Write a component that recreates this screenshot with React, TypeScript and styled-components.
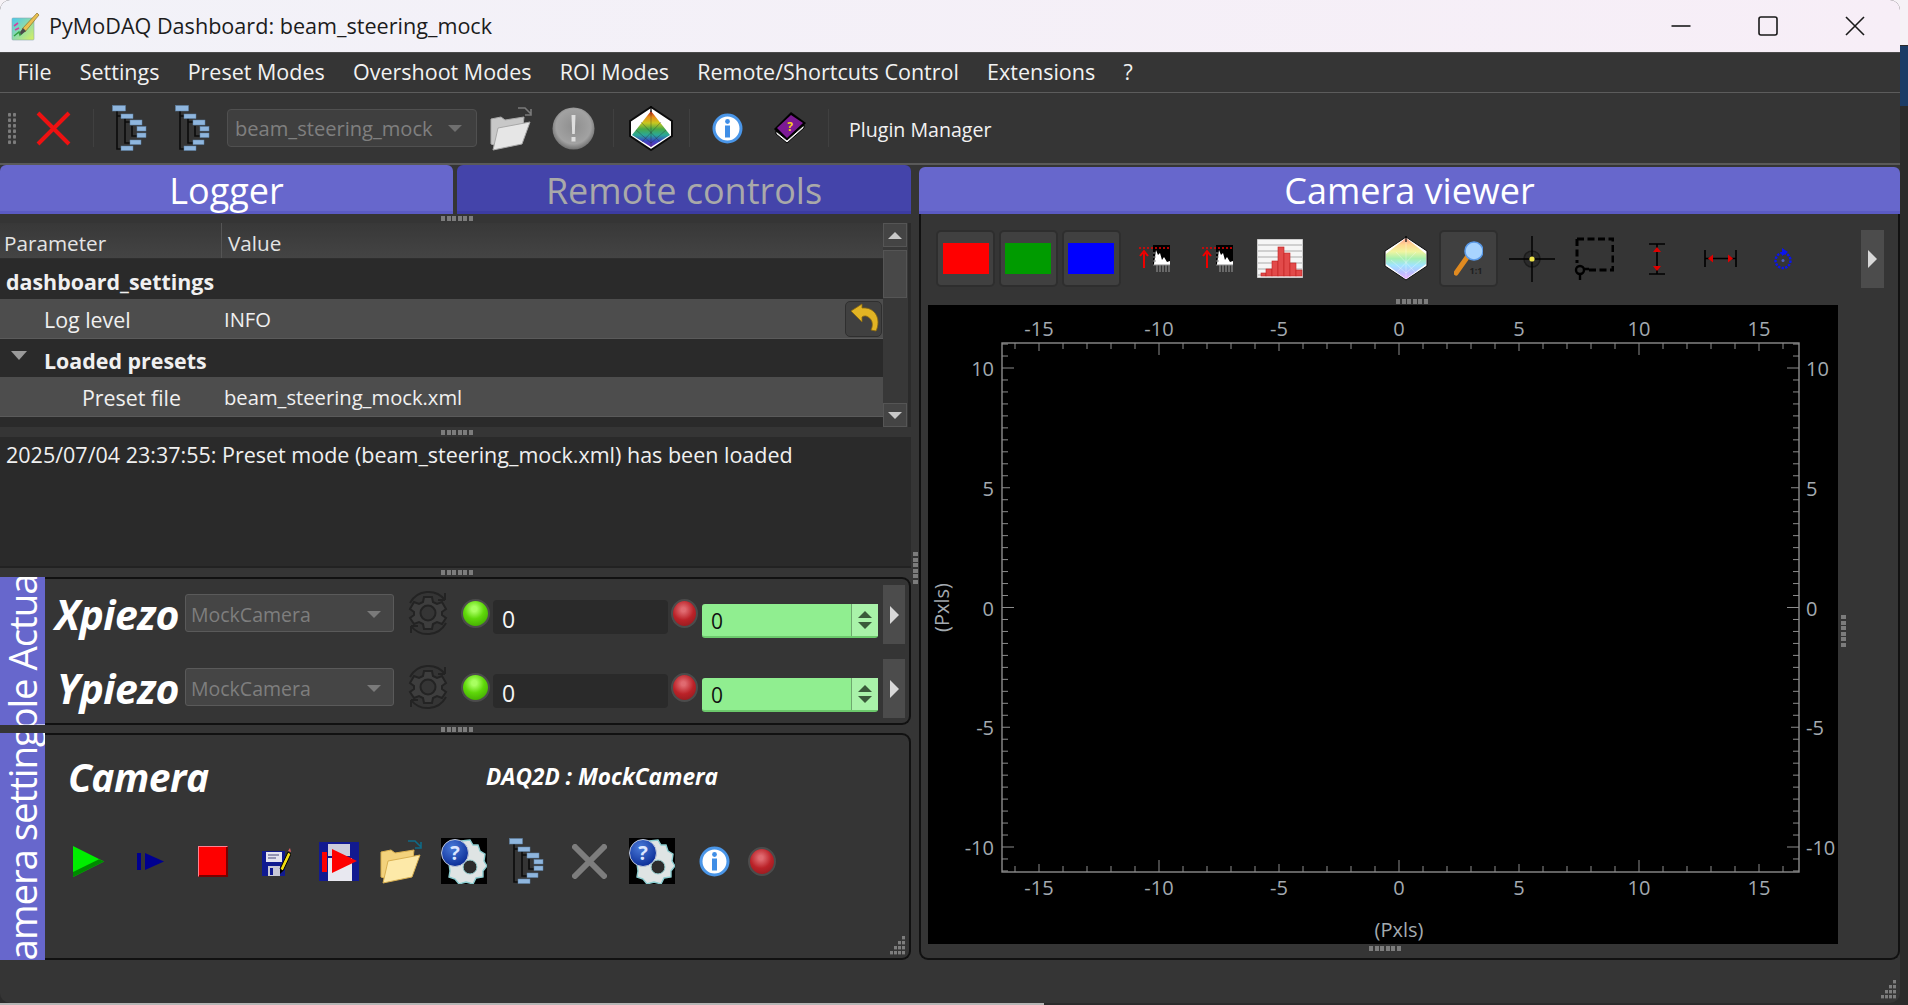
import React from 'react';
import styled, { createGlobalStyle } from 'styled-components';

const GlobalStyle = createGlobalStyle`
  html, body {
    margin: 0;
    padding: 0;
    background: #2b2b2b;
    overflow: hidden;
  }
  * {
    box-sizing: border-box;
  }
`;

const UI_FONT = `"Open Sans", "Noto Sans", "Liberation Sans", sans-serif`;

const Screen = styled.div`
  width: 1908px;
  height: 1005px;
  display: flex;
  flex-direction: column;
  overflow: hidden;
  font-family: ${UI_FONT};
  background: #2b2b2b;
`;

const ScreenTop = styled.div`
  display: flex;
  height: 1003px;
  background: linear-gradient(#f6f2f6 0 45px, transparent 45px);
`;

const ScreenBottom = styled.div`
  height: 2px;
  background: linear-gradient(to right, #b5b5b5 1044px, #2b2b2b 1044px);
`;

const EdgeStrip = styled.div`
  width: 8px;
  padding-top: 46px;
`;

const EdgeBand = styled.div`
  height: 60px;
  background: #1c3c66;
`;

const Window = styled.div`
  width: 1900px;
  height: 1003px;
  display: flex;
  flex-direction: column;
  background: #353535;
  border-radius: 10px;
  overflow: hidden;
`;

const TitleBar = styled.div`
  height: 52px;
  flex: none;
  display: flex;
  align-items: center;
  padding-left: 11px;
  padding-right: 2px;
  background: linear-gradient(to right, #f2f2f8, #f7eef7);
`;

const TitleText = styled.span`
  margin-left: 9px;
  margin-bottom: 2px;
  font-size: 21.6px;
  color: #1c1c1c;
`;

const WindowButtons = styled.div`
  margin-left: auto;
  display: flex;
`;

const WindowButton = styled.div`
  width: 87px;
  height: 52px;
  display: flex;
  align-items: center;
  justify-content: center;
`;

const MenuBar = styled.div`
  height: 41px;
  flex: none;
  display: flex;
  align-items: center;
  padding: 0 0 2px 17.5px;
  gap: 28.2px;
  background: #353535;
  border-bottom: 1px solid #5c5c5c;
  border-top: 1px solid #4a4a4a;
`;

const MenuItem = styled.span`
  font-size: 21.5px;
  color: #f2f2f2;
`;

const ToolBar = styled.div`
  height: 72px;
  flex: none;
  display: flex;
  align-items: center;
  background: #353535;
  border-bottom: 2px solid #5a5a5a;
`;

const Grip = styled.div`
  width: 10px;
  height: 33px;
  margin: 0 5px 0 7px;
  background-image: radial-gradient(circle, #7d7d7d 1.6px, transparent 2px);
  background-size: 5px 5.5px;
`;

const ToolCell = styled.div<{ $w: number }>`
  width: ${(p) => p.$w}px;
  flex: none;
  display: flex;
  align-items: center;
  justify-content: center;
`;

const ToolSep = styled.div`
  width: 1px;
  height: 38px;
  flex: none;
  background: #404040;
`;

const PresetCombo = styled.div`
  width: 250px;
  height: 38px;
  margin-left: 8px;
  flex: none;
  display: flex;
  align-items: center;
  justify-content: space-between;
  padding: 0 14px 0 7px;
  border: 1px solid #505050;
  border-radius: 4px;
  background: #3f3f3f;
  color: #7f7f7f;
  font-size: 20.1px;
`;

const ToolLabel = styled.span`
  margin-left: 20px;
  padding-top: 2px;
  font-size: 19.6px;
  color: #f2f2f2;
`;

const Body = styled.div`
  flex: 1;
  display: flex;
  min-height: 0;
`;

const LeftColumn = styled.div`
  width: 911px;
  flex: none;
  display: flex;
  flex-direction: column;
`;

const TabBar = styled.div`
  height: 49px;
  flex: none;
  display: flex;
  gap: 4px;
`;

const Tab = styled.div<{ $active?: boolean; $w?: number }>`
  width: ${(p) => (p.$w ? `${p.$w}px` : 'auto')};
  flex: ${(p) => (p.$w ? 'none' : 1)};
  display: flex;
  align-items: center;
  justify-content: center;
  padding-top: 4px;
  font-size: 36px;
  border-radius: 6px 6px 0 0;
  border-bottom: 3px solid ${(p) => (p.$active ? '#5b5bc4' : '#3c3ca2')};
  background: ${(p) => (p.$active ? '#6767cc' : '#4444aa')};
  color: ${(p) => (p.$active ? '#ffffff' : '#a9a9a9')};
`;

const HandleRow = styled.div<{ $h: number; $left?: number; $right?: number }>`
  height: ${(p) => p.$h}px;
  flex: none;
  display: flex;
  align-items: center;
  justify-content: center;
  padding-left: ${(p) => p.$left || 0}px;
  padding-right: ${(p) => p.$right || 0}px;
`;

const Dots = styled.div`
  width: 33px;
  height: 5px;
  background: repeating-linear-gradient(90deg, #7c7c7c 0 4px, transparent 4px 5.6px);
`;

const TreePane = styled.div`
  height: 204px;
  flex: none;
  display: flex;
  background: #2a2a2a;
`;

const TreeTable = styled.div`
  width: 883px;
  flex: none;
  display: flex;
  flex-direction: column;
`;

const TreeHeader = styled.div`
  height: 36px;
  flex: none;
  display: flex;
  align-items: center;
  background: linear-gradient(#383838, #444444);
  border-bottom: 1px solid #2e2e2e;
  font-size: 20.7px;
  color: #e4e4e4;
`;

const HeaderCell = styled.div<{ $first?: boolean }>`
  width: ${(p) => (p.$first ? '222px' : 'auto')};
  height: 100%;
  display: flex;
  align-items: center;
  padding-top: 4px;
  padding-left: ${(p) => (p.$first ? '4px' : '6px')};
  border-right: ${(p) => (p.$first ? '1px solid #555' : 'none')};
`;

const TreeRow = styled.div<{ $filled?: boolean; $h: number }>`
  height: ${(p) => p.$h}px;
  flex: none;
  display: flex;
  align-items: center;
  color: #f0f0f0;
  background: ${(p) => (p.$filled ? '#4d4d4d' : '#2a2a2a')};
  border-bottom: ${(p) => (p.$filled ? '1px solid #5a5a5a' : 'none')};
`;

const NameCell = styled.div<{ $indent: number; $bold?: boolean }>`
  width: 224px;
  flex: none;
  position: relative;
  padding-left: ${(p) => p.$indent}px;
  padding-top: ${(p) => (p.$bold ? 4 : 1)}px;
  font-size: 21.4px;
  font-weight: ${(p) => (p.$bold ? 700 : 400)};
  white-space: nowrap;
`;

const ValueCell = styled.div`
  flex: 1;
  font-size: 20.2px;
`;

const ExpandArrow = styled.span`
  position: absolute;
  left: 11px;
  top: 9px;
  border-left: 8px solid transparent;
  border-right: 8px solid transparent;
  border-top: 9px solid #9a9a9a;
`;

const RevertButton = styled.div`
  width: 37px;
  height: 36px;
  margin-right: 1px;
  flex: none;
  display: flex;
  align-items: flex-start;
  justify-content: center;
  padding-top: 1px;
  border: 1px solid #2f2f2f;
  border-radius: 5px;
  background: #404040;
`;

const ScrollBar = styled.div`
  width: 25px;
  flex: none;
  display: flex;
  flex-direction: column;
  background: #383838;
  padding-right: 1px;
`;

const ScrollButton = styled.div`
  height: 24px;
  flex: none;
  display: flex;
  align-items: center;
  justify-content: center;
  background: #444;
  border: 1px solid #555;
`;

const ScrollTrack = styled.div`
  flex: 1;
  padding-top: 3px;
`;

const ScrollThumb = styled.div`
  height: 48px;
  background: #484848;
  border: 1px solid #555;
`;

const Triangle = styled.span<{ $down?: boolean; $size?: number; $color?: string }>`
  border-left: ${(p) => p.$size || 7}px solid transparent;
  border-right: ${(p) => p.$size || 7}px solid transparent;
  ${(p) => (p.$down ? 'border-top' : 'border-bottom')}: ${(p) => p.$size || 7}px solid ${(p) => p.$color || '#c8c8c8'};
`;

const LogPane = styled.div`
  height: 131px;
  flex: none;
  padding: 3px 6px;
  font-size: 21.5px;
  color: #f0f0f0;
  background: #2a2a2a;
  border-bottom: 2px solid #222;
`;

const Dock = styled.div<{ $h: number }>`
  height: ${(p) => p.$h}px;
  flex: none;
  display: flex;
`;

const VerticalTab = styled.div`
  width: 45px;
  flex: none;
  display: flex;
  align-items: center;
  justify-content: center;
  overflow: hidden;
  background: #6767cc;
`;

const VerticalText = styled.span`
  flex: none;
  writing-mode: vertical-rl;
  transform: rotate(180deg);
  white-space: nowrap;
  color: #fff;
  font-size: 38.5px;
  line-height: 45px;
  letter-spacing: -1.1px;
`;

const DockBody = styled.div<{ $pad?: string }>`
  flex: 1;
  position: relative;
  padding: ${(p) => p.$pad || '0'};
  background: #353535;
  border: 2px solid #111;
  border-left: none;
  border-radius: 0 9px 9px 0;
`;

const ActuatorRow = styled.div`
  height: 74px;
  display: flex;
  align-items: flex-start;
  padding-left: 2px;
`;

const ActuatorName = styled.div`
  width: 132px;
  margin-top: 1px;
  flex: none;
  text-align: right;
  font-size: 41px;
  font-weight: 700;
  font-style: italic;
  color: #fff;
  letter-spacing: -0.5px;
  white-space: nowrap;
`;

const ModuleCombo = styled.div`
  width: 209px;
  height: 38px;
  margin: 9px 0 0 6px;
  flex: none;
  display: flex;
  align-items: center;
  justify-content: space-between;
  padding: 2px 12px 0 5px;
  border: 1px solid #5a5a5a;
  border-radius: 3px;
  background: #454545;
  color: #7e7e7e;
  font-size: 19.5px;
`;

const GearSlot = styled.div`
  width: 46px;
  margin: 5px 0 0 11px;
  flex: none;
`;

const Led = styled.div<{ $color: 'green' | 'red'; $w: number; $ml: number; $mt: number }>`
  width: ${(p) => p.$w}px;
  height: 29px;
  margin: ${(p) => p.$mt}px 0 0 ${(p) => p.$ml}px;
  flex: none;
  border-radius: 50%;
  border: 2px solid #4c4c4c;
  background: ${(p) =>
    p.$color === 'green'
      ? 'radial-gradient(circle at 45% 32%, #a8ff60 0 12%, #5fd80a 45%, #3ea400 90%)'
      : 'radial-gradient(circle at 45% 35%, #e06a70 0 10%, #bb2228 50%, #8e1a1e 92%)'};
`;

const ValueDisplay = styled.div`
  width: 175px;
  height: 34px;
  margin: 15px 0 0 3px;
  flex: none;
  padding: 4px 9px;
  border-radius: 4px;
  background: #2a2a2a;
  color: #f5f5f5;
  font-size: 23px;
  line-height: 30px;
`;

const SpinBox = styled.div`
  width: 176px;
  height: 34px;
  margin: 19px 0 0 4px;
  flex: none;
  display: flex;
  justify-content: space-between;
  border-radius: 3px;
  border-bottom: 2px solid #6cc96c;
  background: #90ee90;
  color: #111;
  font-size: 21px;
  line-height: 34px;
  padding-left: 9px;
`;

const SpinSteps = styled.div`
  width: 27px;
  flex: none;
  display: flex;
  flex-direction: column;
  align-items: center;
  justify-content: center;
  gap: 4px;
  background: #a9f2a9;
  border-left: 1px solid #6fa86f;
`;

const SideToggle = styled.div<{ $w?: number; $ml?: string; $h?: number }>`
  width: ${(p) => p.$w || 22}px;
  height: ${(p) => p.$h || 59}px;
  margin-left: ${(p) => p.$ml || '5px'};
  flex: none;
  display: flex;
  align-items: center;
  justify-content: center;
  background: #4c4c4c;
`;

const RightArrow = styled.span`
  border-top: 9px solid transparent;
  border-bottom: 9px solid transparent;
  border-left: 9px solid #d8d8d8;
`;

const CameraHead = styled.div`
  height: 82px;
  display: flex;
  align-items: center;
  padding-left: 23px;
`;

const CameraName = styled.div`
  width: 417px;
  flex: none;
  font-size: 39px;
  font-weight: 700;
  font-style: italic;
  color: #fff;
  letter-spacing: -0.5px;
`;

const ModuleTag = styled.div`
  margin-left: 1px;
  font-size: 22.6px;
  font-weight: 700;
  font-style: italic;
  color: #fff;
`;

const IconRow = styled.div`
  display: flex;
  align-items: center;
  height: 50px;
  margin-top: 19px;
  padding-left: 12px;
`;

const SizeGrip = styled.div<{ $r: number; $b: number }>`
  position: absolute;
  right: ${(p) => p.$r}px;
  bottom: ${(p) => p.$b}px;
  line-height: 0;
`;

const Gutter = styled.div`
  width: 8px;
  flex: none;
  display: flex;
  align-items: center;
  justify-content: center;
  padding-bottom: 34px;
`;

const GutterDots = styled.div`
  width: 5px;
  height: 33px;
  background: repeating-linear-gradient(0deg, #7c7c7c 0 4px, transparent 4px 5.6px);
`;

const RightColumn = styled.div`
  flex: 1;
  min-width: 0;
  position: relative;
  display: flex;
  flex-direction: column;
  padding-top: 2px;
`;

const ViewerTab = styled(Tab)`
  height: 47px;
  flex: none;
  padding-top: 2px;
`;

const ViewerPanel = styled.div`
  height: 746px;
  flex: none;
  display: flex;
  flex-direction: column;
  border: 2px solid #111;
  border-top: none;
  border-radius: 0 0 9px 9px;
`;

const ViewerTools = styled.div`
  height: 83px;
  flex: none;
  display: flex;
  align-items: center;
  gap: 3.9px;
  padding: 6px 14px 0 15px;
`;

const CheckButton = styled.div<{ $checked?: boolean }>`
  width: 59px;
  height: 57px;
  flex: none;
  display: flex;
  align-items: center;
  justify-content: center;
  border-radius: 5px;
  border: ${(p) => (p.$checked ? '2px solid #2e2e2e' : '2px solid transparent')};
  background: ${(p) => (p.$checked ? '#404040' : 'transparent')};
`;

const ColorSwatch = styled.div<{ $color: string }>`
  width: 46px;
  height: 31px;
  background: ${(p) => p.$color};
`;

const ViewerMiddle = styled.div`
  flex: none;
  display: flex;
  padding-left: 7px;
  height: 639px;
`;

const PlotBox = styled.div`
  width: 910px;
  flex: none;
  height: 639px;
  background: #000;
`;

const PlotSide = styled.div`
  flex: 1;
  display: flex;
  align-items: center;
  padding: 12px 0 0 3px;
`;

/* ---------- drawn icons ---------- */

const TreeIcon = () => (
  <svg width="35" height="46" viewBox="0 0 35 46">
    <g stroke="#0c0c0c" strokeWidth="1.6" fill="none">
      <path d="M5 6V44H9M5 11H9" />
      <path d="M13 13V38H18M13 17H18" />
      <path d="M20 21V31H25" />
    </g>
    <g fill="#8fb6de" stroke="#5f83a8" strokeWidth="0.5">
      <rect x="0.5" y="0.5" width="13" height="5.5" />
      <rect x="9" y="9" width="12" height="4.5" />
      <rect x="18" y="15" width="12" height="5" />
      <rect x="25" y="21.5" width="9" height="4.5" />
      <rect x="25" y="28" width="9" height="4.5" />
      <rect x="18" y="35" width="11" height="4.5" />
      <rect x="9" y="41" width="12" height="4.5" />
    </g>
  </svg>
);

const FolderIcon = ({ gray }: { gray?: boolean }) => {
  const back = gray ? '#c8c8c8' : '#f3d27c';
  const front = gray ? '#e6e6e6' : '#fde9a8';
  const edge = gray ? '#a8a8a8' : '#d9b050';
  const arrow = gray ? '#7a7a7a' : '#0f6a86';
  return (
    <svg width="45" height="45" viewBox="0 0 45 45">
      <path d="M29 2H36L42 8M42 3V9H36" fill="none" stroke={arrow} strokeWidth="1.6" />
      <path d="M2 13L12 11L16 14L35 11L34 20L5 39L2 38Z" fill={back} stroke={edge} strokeWidth="1" />
      <path d="M9 22L41 16L33 38L4 44Z" fill={front} stroke={edge} strokeWidth="1" />
    </svg>
  );
};

const WarningIcon = () => (
  <svg width="43" height="43" viewBox="0 0 43 43">
    <defs>
      <radialGradient id="warnBall" cx="50%" cy="45%" r="55%">
        <stop offset="0" stopColor="#8e8e8e" />
        <stop offset="0.75" stopColor="#a2a2a2" />
        <stop offset="1" stopColor="#707070" />
      </radialGradient>
    </defs>
    <circle cx="21.5" cy="21.5" r="21" fill="url(#warnBall)" />
    <path d="M19.5 8H23.5L22.8 27H20.2Z" fill="#dedede" />
    <rect x="19.5" y="30" width="4" height="4.5" fill="#dedede" />
  </svg>
);

const ColormapIcon = ({ id, pale }: { id: string; pale?: boolean }) => {
  const stops = pale
    ? ['#ff9c90', '#ffd890', '#f0f5a0', '#a8f0b0', '#a0e4ff', '#b8c0ff', '#eeb0ff']
    : ['#b81a10', '#e89018', '#c8c820', '#48a848', '#2aa898', '#3848c0', '#6a2ab8'];
  const body = pale ? 'M23 2L43 18V28L23 43L3 28V18Z' : 'M23 5L42 29L23 41L4 29Z';
  return (
    <svg width="46" height="45" viewBox="0 0 46 45">
      <defs>
        <linearGradient id={id} x1="0" y1="0" x2="0" y2="1">
          {stops.map((c, i) => (
            <stop key={c} offset={i / (stops.length - 1)} stopColor={c} />
          ))}
        </linearGradient>
      </defs>
      <path
        d="M23 1L44 15V30L23 44L2 30V15Z"
        fill="#fff"
        stroke="#0c0c0c"
        strokeWidth={pale ? 1 : 2}
      />
      <path d={body} fill={`url(#${id})`} />
      <g stroke={pale ? '#ffffff' : '#222'} strokeWidth="0.6" opacity="0.55" fill="none">
        <path d="M23 4V41M13 16L32 36M33 16L14 36M8 24L23 37L38 24" />
      </g>
      <path d="M23 0V6" stroke="#000" strokeWidth="1.2" />
    </svg>
  );
};

const InfoIcon = () => (
  <svg width="31" height="31" viewBox="0 0 31 31">
    <circle cx="15.5" cy="15.5" r="13.5" fill="#fff" stroke="#4a96e8" strokeWidth="3" />
    <circle cx="15.5" cy="8.5" r="2.4" fill="#3f8ee6" />
    <rect x="13" y="12.5" width="5" height="12" fill="#3f8ee6" />
  </svg>
);

const BookIcon = () => (
  <svg width="32" height="32" viewBox="0 0 32 32">
    <path d="M0 17L17 0L32 11L13 31Z" fill="#000" />
    <path d="M2 19L13 28L30 13V16L13 31L2 22Z" fill="#ececec" stroke="#000" strokeWidth="1" />
    <path d="M3 16L17 3L29 11L13 26Z" fill="#7c1a94" />
    <text x="16" y="19" fontFamily={UI_FONT} fontSize="12" fontWeight="700" fill="#f5d020" textAnchor="middle">
      ?
    </text>
  </svg>
);

const RevertIcon = () => (
  <svg width="30" height="30" viewBox="0 0 30 30">
    <path
      d="M2 8L13 1V5C22 4 29 10 29 19C29 23 28 26 27 28L22 27C25 21 23 15 17 13C15 13 14 13 13 14V19Z"
      fill="#e2b424"
      stroke="#8a6a10"
      strokeWidth="0.8"
    />
  </svg>
);

const CloseRedIcon = () => (
  <svg width="35" height="35" viewBox="0 0 35 35">
    <path d="M2 2L33 33M33 2L2 33" stroke="#ee1111" strokeWidth="4" />
  </svg>
);

const GrayCross = () => (
  <svg width="35" height="35" viewBox="0 0 35 35">
    <path d="M3 3L32 32M32 3L3 32" stroke="#7d7d7d" strokeWidth="6" strokeLinecap="round" />
  </svg>
);

const GearOutline = () => (
  <svg width="46" height="46" viewBox="0 0 46 46" fill="none" stroke="#232323" strokeWidth="2">
    <path d="M5 13A21 21 0 0 1 40 10M40 10L40 3M40 10L33 10" />
    <path d="M41 33A21 21 0 0 1 6 36M6 36L6 43M6 36L13 36" />
    <path
      d="M19 7H27L28 12L32 14L37 12L41 19L37 22V25L41 28L37 34L32 32L28 34L27 39H19L18 34L14 32L9 34L5 28L9 25V22L5 19L9 12L14 14L18 12Z"
      fill="#3e3e3e"
    />
    <circle cx="23" cy="23" r="7.5" fill="#353535" />
  </svg>
);

const HelpGear = ({ id }: { id: string }) => (
  <svg width="46" height="46" viewBox="0 0 46 46">
    <defs>
      <radialGradient id={id} cx="40%" cy="30%" r="70%">
        <stop offset="0" stopColor="#4a7ad8" />
        <stop offset="1" stopColor="#0c2e98" />
      </radialGradient>
    </defs>
    <rect width="46" height="46" fill="#000" />
    <path
      d="M20 3L29 2L32 7L37 7L39 13L44 16L43 23L46 28L42 33L42 39L35 40L32 46L25 44L18 46L14 41L8 39L9 33L8 26L16 22Z"
      fill="#dfe4e4"
      stroke="#8ccdd0"
      strokeWidth="1.4"
    />
    <circle cx="29" cy="29" r="7" fill="#2c2c2c" stroke="#9ad4d6" strokeWidth="1" />
    <circle cx="14" cy="15" r="13.5" fill={`url(#${id})`} stroke="#c0c8d8" strokeWidth="1" />
    <text x="14" y="22" fontFamily={UI_FONT} fontSize="20" fontWeight="700" fill="#dce6ff" textAnchor="middle">
      ?
    </text>
  </svg>
);

const PlayIcon = () => (
  <svg width="31" height="31" viewBox="0 0 31 31">
    <path d="M0 0L31 15.5L0 31Z" fill="#00ee00" />
    <path d="M0 31V26L26 13.2L31 15.5Z" fill="#008a00" />
  </svg>
);

const StepIcon = () => (
  <svg width="27" height="17" viewBox="0 0 27 17">
    <rect x="0" y="0" width="4" height="17" fill="#000090" />
    <path d="M8 0L27 8.5L8 17Z" fill="#000090" />
  </svg>
);

const StopIcon = () => (
  <svg width="30" height="31" viewBox="0 0 30 31">
    <rect width="30" height="31" fill="#7a0000" />
    <path d="M0 0H30L29 1H1V30L0 31Z" fill="#ff8090" />
    <rect x="1" y="1" width="27" height="28" fill="#fe0000" />
  </svg>
);

const SaveIcon = () => (
  <svg width="29" height="29" viewBox="0 0 29 29">
    <path d="M0 4H23V29H0Z" fill="#101a90" />
    <rect x="4" y="5" width="16" height="10" fill="#e4e4f0" />
    <path d="M6 8H17M6 11H14" stroke="#7a7aa0" strokeWidth="1.5" />
    <rect x="6" y="19" width="12" height="10" fill="#c8c8d8" />
    <rect x="8" y="21" width="3" height="7" fill="#101a90" />
    <path d="M18 22L26 5L29 7L21 24Z" fill="#f2de10" stroke="#000" strokeWidth="1" />
    <path d="M26 4L28 1L29 5Z" fill="#e06060" />
    <path d="M18 22L18 27L21 24Z" fill="#000" />
  </svg>
);

const SaveRunIcon = () => (
  <svg width="40" height="39" viewBox="0 0 40 39">
    <rect width="40" height="39" fill="#121a90" />
    <rect x="9" y="2" width="22" height="12" fill="#ccccdc" />
    <rect x="9" y="16" width="24" height="23" fill="#e8e8f0" />
    <rect x="3" y="10" width="5" height="20" fill="#fe0000" />
    <path d="M13 7L38 19L13 31Z" fill="#fe0000" />
  </svg>
);

const RoiIcon = () => (
  <svg width="31" height="27" viewBox="0 0 31 27">
    <rect x="14" y="0" width="17" height="20" fill="#000" />
    <path d="M15 19L17 5L19 10L21 8L23 15L25 12L28 17L31 16V20H15Z" fill="#fff" />
    <path d="M14 20H31M14 16H17M14 12H17M14 8H17M18 20V27M21 20V27M24 20V27M27 20V27M30 20V27" stroke="#8a8a8a" strokeWidth="1.2" />
    <path d="M0 3H31" stroke="#ee0000" strokeWidth="1.6" strokeDasharray="2 2" />
    <path d="M5 23V8M1 11L5 6L9 11" stroke="#ee0000" strokeWidth="2" fill="none" />
  </svg>
);

const HistogramIcon = () => (
  <svg width="46" height="39" viewBox="0 0 46 39">
    <rect width="46" height="39" fill="#f6f6f6" stroke="#a0a0a0" />
    <path d="M1 6H45M1 12H45M1 18H45M1 24H45M1 30H45M1 36H45" stroke="#c4c4c4" strokeWidth="1.4" />
    <g fill="#e24a4a" stroke="#c02020" strokeWidth="0.6">
      <rect x="4" y="34" width="5" height="3" />
      <rect x="9" y="30" width="6" height="7" />
      <rect x="15" y="22" width="6" height="15" />
      <rect x="21" y="8" width="6" height="29" />
      <rect x="27" y="14" width="6" height="23" />
      <rect x="33" y="24" width="6" height="13" />
      <rect x="39" y="31" width="6" height="6" />
    </g>
  </svg>
);

const ZoomOneIcon = () => (
  <svg width="29" height="35" viewBox="0 0 29 35">
    <path d="M2 32L14 15" stroke="#e08a20" strokeWidth="5" strokeLinecap="round" />
    <circle cx="20" cy="10" r="9" fill="#a8d4ff" stroke="#5a9ae8" strokeWidth="1.5" />
    <text x="22" y="33" fontFamily={UI_FONT} fontSize="9" fontWeight="700" fill="#1e1e1e" textAnchor="middle">
      1:1
    </text>
  </svg>
);

const CrosshairIcon = () => (
  <svg width="46" height="46" viewBox="0 0 46 46">
    <circle cx="23" cy="23" r="8" fill="#2a2a2a" stroke="#1c1c1c" strokeWidth="1.5" />
    <path d="M23 0V46M0 23H46" stroke="#000" strokeWidth="1.4" />
    <circle cx="23" cy="23" r="2.6" fill="#efe44a" />
  </svg>
);

const RoiRectIcon = () => (
  <svg width="40" height="43" viewBox="0 0 40 43">
    <path d="M3 2H39V33H15M3 2V26" fill="none" stroke="#000" strokeWidth="3" strokeDasharray="7 3.5" />
    <circle cx="6" cy="33" r="4" fill="none" stroke="#000" strokeWidth="2.4" />
    <path d="M6 37V43M10 32H15" stroke="#000" strokeWidth="2.4" />
  </svg>
);

const VerticalIcon = () => (
  <svg width="18" height="32" viewBox="0 0 18 32">
    <path d="M1 1H17M1 31H17M9 1V31" stroke="#000" strokeWidth="1.6" />
    <path d="M5 9L9 4L13 9ZM5 23L9 28L13 23Z" fill="#e00000" />
  </svg>
);

const HorizontalIcon = () => (
  <svg width="33" height="17" viewBox="0 0 33 17">
    <path d="M1 0V17M32 0V17M1 8.5H32" stroke="#000" strokeWidth="1.6" />
    <path d="M9 4.5L4 8.5L9 12.5ZM24 4.5L29 8.5L24 12.5Z" fill="#e00000" />
  </svg>
);

const RotateIcon = () => (
  <svg width="18" height="22" viewBox="0 0 18 22">
    <circle cx="9" cy="12.5" r="7.5" fill="none" stroke="#0a14f0" strokeWidth="2.4" strokeDasharray="2.4 1.2" />
    <path d="M8 0L14 4L8 8Z" fill="#0a14f0" />
    <circle cx="9" cy="12.5" r="1.5" fill="#5060c0" />
  </svg>
);

const CornerGrip = () => (
  <svg width="21" height="21" viewBox="0 0 21 21" fill="#7d7d7d">
    {[
      [16, 1],
      [12, 6],
      [16, 6],
      [8, 11],
      [12, 11],
      [16, 11],
      [4, 16],
      [8, 16],
      [12, 16],
      [16, 16],
    ].map(([x, y]) => (
      <rect key={`${x}-${y}`} x={x} y={y} width="3" height="3.4" />
    ))}
  </svg>
);

const AppLogo = () => (
  <svg width="29" height="29" viewBox="0 0 29 29">
    <defs>
      <linearGradient id="logoBg" x1="0" y1="0" x2="1" y2="1">
        <stop offset="0" stopColor="#48c8f0" />
        <stop offset="1" stopColor="#d8f060" />
      </linearGradient>
    </defs>
    <rect x="1" y="6" width="22" height="22" rx="1" fill="url(#logoBg)" stroke="#8aa8b0" strokeWidth="0.6" />
    <path d="M3 24L8 20L9 23L13 18" stroke="#30a040" strokeWidth="1.4" fill="none" />
    <path d="M3 14L7 11M4 18L8 16" stroke="#d040a0" strokeWidth="1.6" />
    <path d="M11 17L26 1L28 3L14 20Z" fill="#e8c050" stroke="#7a6020" strokeWidth="0.6" />
    <path d="M9 20L12 16L15 19L10 23Z" fill="#4a4a4a" />
  </svg>
);

/* ---------- chart ---------- */

const X0 = 471;
const Y0 = 302.5;
const AXIS = { left: 74, right: 871, top: 38, bottom: 567 };
const X_TICKS = Array.from({ length: 33 }, (_, i) => i - 16);
const Y_TICKS = Array.from({ length: 45 }, (_, i) => (i - 22) / 2);
const MAJOR = [-15, -10, -5, 0, 5, 10, 15];
const Y_LABELS = [-10, -5, 0, 5, 10];

const tickLength = (v: number) => {
  if (v % 10 === 0) return 12;
  if (v % 5 === 0) return 8;
  return 6;
};

const ImagePlot = () => (
  <svg width="910" height="639" viewBox="0 0 910 639">
    <rect x={AXIS.left} y={AXIS.top} width={AXIS.right - AXIS.left} height={AXIS.bottom - AXIS.top} fill="none" stroke="#8c8c8c" strokeWidth="1.4" />
    <g stroke="#8c8c8c" strokeWidth="1">
      {X_TICKS.map((v) => {
        const x = X0 + v * 24;
        const len = tickLength(v);
        return (
          <React.Fragment key={v}>
            <line x1={x} x2={x} y1={AXIS.top} y2={AXIS.top + len} />
            <line x1={x} x2={x} y1={AXIS.bottom} y2={AXIS.bottom - len} />
          </React.Fragment>
        );
      })}
      {Y_TICKS.map((v) => {
        const y = Y0 - v * 23.95;
        const len = tickLength(v);
        return (
          <React.Fragment key={v}>
            <line x1={AXIS.left} x2={AXIS.left + len} y1={y} y2={y} />
            <line x1={AXIS.right} x2={AXIS.right - len} y1={y} y2={y} />
          </React.Fragment>
        );
      })}
    </g>
    <g fontFamily={UI_FONT} fontSize="20" fill="#a3aab0">
      {MAJOR.map((v) => (
        <React.Fragment key={v}>
          <text x={X0 + v * 24} y={31} textAnchor="middle">{v}</text>
          <text x={X0 + v * 24} y={590} textAnchor="middle">{v}</text>
        </React.Fragment>
      ))}
      {Y_LABELS.map((v) => (
        <React.Fragment key={v}>
          <text x={66} y={Y0 - v * 23.95 + 8} textAnchor="end">{v}</text>
          <text x={878} y={Y0 - v * 23.95 + 8}>{v}</text>
        </React.Fragment>
      ))}
      <text x={X0} y={632} textAnchor="middle">(Pxls)</text>
      <text x={0} y={0} textAnchor="middle" transform={`translate(21 ${Y0}) rotate(-90)`}>(Pxls)</text>
    </g>
  </svg>
);

const MENU = ['File', 'Settings', 'Preset Modes', 'Overshoot Modes', 'ROI Modes', 'Remote/Shortcuts Control', 'Extensions', '?'];

const ACTUATORS = ['Xpiezo', 'Ypiezo'];

const App: React.FC = () => (
  <Screen>
    <GlobalStyle />
    <ScreenTop>
      <Window>
        <TitleBar>
          <AppLogo />
          <TitleText>PyMoDAQ Dashboard: beam_steering_mock</TitleText>
          <WindowButtons>
            <WindowButton>
              <svg width="20" height="20" viewBox="0 0 20 20">
                <path d="M0.5 10H19.5" stroke="#1a1a1a" strokeWidth="1.6" />
              </svg>
            </WindowButton>
            <WindowButton>
              <svg width="20" height="20" viewBox="0 0 20 20">
                <rect x="1" y="1" width="18" height="18" rx="2" fill="none" stroke="#1a1a1a" strokeWidth="1.6" />
              </svg>
            </WindowButton>
            <WindowButton>
              <svg width="20" height="20" viewBox="0 0 20 20">
                <path d="M1 1L19 19M19 1L1 19" stroke="#1a1a1a" strokeWidth="1.6" />
              </svg>
            </WindowButton>
          </WindowButtons>
        </TitleBar>

        <MenuBar>
          {MENU.map((m) => (
            <MenuItem key={m}>{m}</MenuItem>
          ))}
        </MenuBar>

        <ToolBar>
          <Grip />
          <ToolCell $w={63}>
            <CloseRedIcon />
          </ToolCell>
          <ToolCell $w={8} />
          <ToolSep />
          <ToolCell $w={71}>
            <TreeIcon />
          </ToolCell>
          <ToolCell $w={54}>
            <TreeIcon />
          </ToolCell>
          <PresetCombo>
            beam_steering_mock
            <Triangle $down $size={7} $color="#6f6f6f" />
          </PresetCombo>
          <ToolCell $w={68}>
            <FolderIcon gray />
          </ToolCell>
          <ToolCell $w={57}>
            <WarningIcon />
          </ToolCell>
          <ToolCell $w={11} />
          <ToolSep />
          <ToolCell $w={73}>
            <ColormapIcon id="cmapDark" />
          </ToolCell>
          <ToolCell $w={2} />
          <ToolSep />
          <ToolCell $w={74}>
            <InfoIcon />
          </ToolCell>
          <ToolCell $w={52}>
            <BookIcon />
          </ToolCell>
          <ToolCell $w={12} />
          <ToolSep />
          <ToolLabel>Plugin Manager</ToolLabel>
        </ToolBar>

        <Body>
          <LeftColumn>
            <TabBar>
              <Tab $active $w={453}>Logger</Tab>
              <Tab>Remote controls</Tab>
            </TabBar>
            <HandleRow $h={9} $left={3}>
              <Dots />
            </HandleRow>
            <TreePane>
              <TreeTable>
                <TreeHeader>
                  <HeaderCell $first>Parameter</HeaderCell>
                  <HeaderCell>Value</HeaderCell>
                </TreeHeader>
                <TreeRow $h={40}>
                  <NameCell $indent={6} $bold>dashboard_settings</NameCell>
                </TreeRow>
                <TreeRow $h={40} $filled>
                  <NameCell $indent={44}>Log level</NameCell>
                  <ValueCell>INFO</ValueCell>
                  <RevertButton>
                    <RevertIcon />
                  </RevertButton>
                </TreeRow>
                <TreeRow $h={38}>
                  <NameCell $indent={44} $bold>
                    <ExpandArrow />
                    Loaded presets
                  </NameCell>
                </TreeRow>
                <TreeRow $h={40} $filled>
                  <NameCell $indent={82}>Preset file</NameCell>
                  <ValueCell>beam_steering_mock.xml</ValueCell>
                </TreeRow>
              </TreeTable>
              <ScrollBar>
                <ScrollButton>
                  <Triangle />
                </ScrollButton>
                <ScrollTrack>
                  <ScrollThumb />
                </ScrollTrack>
                <ScrollButton>
                  <Triangle $down />
                </ScrollButton>
              </ScrollBar>
            </TreePane>
            <HandleRow $h={10} $left={3}>
              <Dots />
            </HandleRow>
            <LogPane>2025/07/04 23:37:55: Preset mode (beam_steering_mock.xml) has been loaded</LogPane>
            <HandleRow $h={9} $left={3}>
              <Dots />
            </HandleRow>
            <Dock $h={148}>
              <VerticalTab>
                <VerticalText>Simple Actuators</VerticalText>
              </VerticalTab>
              <DockBody $pad="6px 0 0 0">
                {ACTUATORS.map((name) => (
                  <ActuatorRow key={name}>
                    <ActuatorName>{name}</ActuatorName>
                    <ModuleCombo>
                      MockCamera
                      <Triangle $down $size={7} $color="#7a7a7a" />
                    </ModuleCombo>
                    <GearSlot>
                      <GearOutline />
                    </GearSlot>
                    <Led $color="green" $w={29} $ml={10} $mt={14} />
                    <ValueDisplay>0</ValueDisplay>
                    <Led $color="red" $w={27} $ml={3} $mt={14} />
                    <SpinBox>
                      0
                      <SpinSteps>
                        <Triangle $size={7} $color="#3a5a3a" />
                        <Triangle $down $size={7} $color="#3a5a3a" />
                      </SpinSteps>
                    </SpinBox>
                    <SideToggle>
                      <RightArrow />
                    </SideToggle>
                  </ActuatorRow>
                ))}
              </DockBody>
            </Dock>
            <HandleRow $h={8} $left={3}>
              <Dots />
            </HandleRow>
            <Dock $h={227}>
              <VerticalTab>
                <VerticalText>Camera settings</VerticalText>
              </VerticalTab>
              <DockBody>
                <CameraHead>
                  <CameraName>Camera</CameraName>
                  <ModuleTag>DAQ2D : MockCamera</ModuleTag>
                </CameraHead>
                <IconRow>
                  <ToolCell $w={62.6}><PlayIcon /></ToolCell>
                  <ToolCell $w={62.6}><StepIcon /></ToolCell>
                  <ToolCell $w={62.6}><StopIcon /></ToolCell>
                  <ToolCell $w={62.6}><SaveIcon /></ToolCell>
                  <ToolCell $w={62.6}><SaveRunIcon /></ToolCell>
                  <ToolCell $w={62.6}><FolderIcon /></ToolCell>
                  <ToolCell $w={62.6}><HelpGear id="helpA" /></ToolCell>
                  <ToolCell $w={62.6}><TreeIcon /></ToolCell>
                  <ToolCell $w={62.6}><GrayCross /></ToolCell>
                  <ToolCell $w={62.6}><HelpGear id="helpB" /></ToolCell>
                  <ToolCell $w={62.6}><InfoIcon /></ToolCell>
                  <Led $color="red" $w={28} $ml={2} $mt={0} />
                </IconRow>
                <SizeGrip $r={2} $b={2}>
                  <CornerGrip />
                </SizeGrip>
              </DockBody>
            </Dock>
          </LeftColumn>

          <Gutter>
            <GutterDots />
          </Gutter>

          <RightColumn>
            <ViewerTab $active>Camera viewer</ViewerTab>
            <ViewerPanel>
              <ViewerTools>
                <CheckButton $checked><ColorSwatch $color="#ff0000" /></CheckButton>
                <CheckButton $checked><ColorSwatch $color="#009b00" /></CheckButton>
                <CheckButton $checked><ColorSwatch $color="#0000ff" /></CheckButton>
                <CheckButton><RoiIcon /></CheckButton>
                <CheckButton><RoiIcon /></CheckButton>
                <CheckButton><HistogramIcon /></CheckButton>
                <CheckButton />
                <CheckButton><ColormapIcon id="cmapPale" pale /></CheckButton>
                <CheckButton $checked><ZoomOneIcon /></CheckButton>
                <CheckButton><CrosshairIcon /></CheckButton>
                <CheckButton><RoiRectIcon /></CheckButton>
                <CheckButton><VerticalIcon /></CheckButton>
                <CheckButton><HorizontalIcon /></CheckButton>
                <CheckButton><RotateIcon /></CheckButton>
                <SideToggle $ml="auto" $w={23} $h={58}>
                  <RightArrow />
                </SideToggle>
              </ViewerTools>
              <HandleRow $h={8} $left={6}>
                <Dots />
              </HandleRow>
              <ViewerMiddle>
                <PlotBox>
                  <ImagePlot />
                </PlotBox>
                <PlotSide>
                  <GutterDots />
                </PlotSide>
              </ViewerMiddle>
              <HandleRow $h={9} $right={48}>
                <Dots />
              </HandleRow>
            </ViewerPanel>
            <SizeGrip $r={2} $b={3}>
              <CornerGrip />
            </SizeGrip>
          </RightColumn>
        </Body>
      </Window>
      <EdgeStrip>
        <EdgeBand />
      </EdgeStrip>
    </ScreenTop>
    <ScreenBottom />
  </Screen>
);

export default App;
